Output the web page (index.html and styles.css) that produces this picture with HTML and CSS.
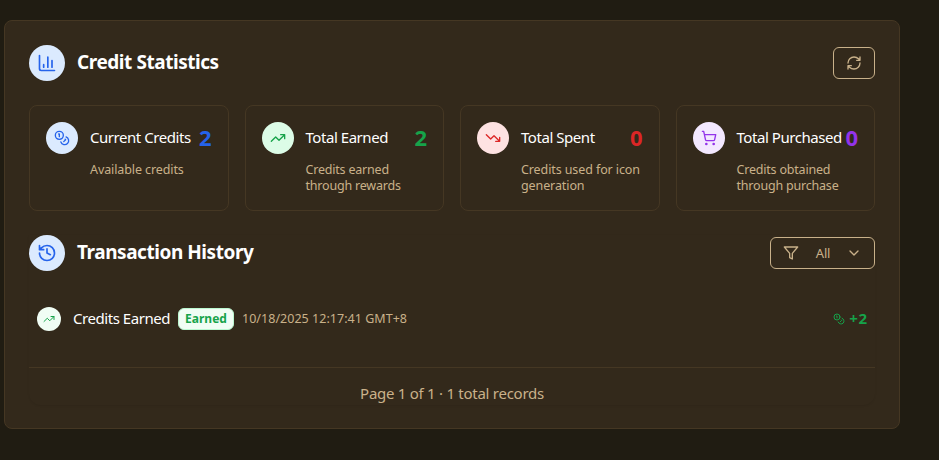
FILE: index.html
```html
<!DOCTYPE html>
<html lang="en">
<head>
<meta charset="utf-8">
<title>Credit Statistics</title>
<link rel="stylesheet" href="styles.css">
</head>
<body>
<svg class="defs" aria-hidden="true">
  <symbol id="chart" viewBox="0 0 24 24"><path d="M3 3v16a2 2 0 0 0 2 2h16M18 17V9M13 17V5M8 17v-3"/></symbol>
  <symbol id="coins" viewBox="0 0 24 24"><circle cx="8" cy="8" r="6"/><path d="M18.09 10.37A6 6 0 1 1 10.34 18M7 6h1v4M16.71 13.88l.7.71-2.82 2.82"/></symbol>
  <symbol id="up" viewBox="0 0 24 24"><path d="M22 7l-8.5 8.5-5-5L2 17M16 7h6v6"/></symbol>
  <symbol id="down" viewBox="0 0 24 24"><path d="M22 17l-8.5-8.5-5 5L2 7M16 17h6v-6"/></symbol>
  <symbol id="cart" viewBox="0 0 24 24"><circle cx="8" cy="21" r="1"/><circle cx="19" cy="21" r="1"/><path d="M2.05 2.05h2l2.66 12.42a2 2 0 0 0 2 1.58h9.78a2 2 0 0 0 1.95-1.57l1.65-7.43H5.12"/></symbol>
  <symbol id="refresh" viewBox="0 0 24 24"><path d="M3 12a9 9 0 0 1 9-9 9.75 9.75 0 0 1 6.74 2.74L21 8M21 3v5h-5M21 12a9 9 0 0 1-9 9 9.75 9.75 0 0 1-6.74-2.74L3 16M8 16H3v5"/></symbol>
  <symbol id="history" viewBox="0 0 24 24"><path d="M3 12a9 9 0 1 0 9-9 9.75 9.75 0 0 0-6.74 2.74L3 8M3 3v5h5M12 7v5l4 2"/></symbol>
  <symbol id="filter" viewBox="0 0 24 24"><path d="M22 3H2l8 9.46V19l4 2v-8.54z"/></symbol>
  <symbol id="chevron" viewBox="0 0 24 24"><path d="M6 9l6 6 6-6"/></symbol>
</svg>
<main class="panel">
  <header class="section-head">
    <span class="circle circle-lg blue"><svg class="icon i20"><use href="#chart"/></svg></span>
    <h2 class="heading">Credit Statistics</h2>
    <button class="btn btn-refresh" aria-label="Refresh"><svg class="icon i16"><use href="#refresh"/></svg></button>
  </header>
  <section class="cards">
    <article class="card">
      <span class="circle circle-md blue"><svg class="icon i16"><use href="#coins"/></svg></span>
      <div class="card-body">
        <div class="card-top"><h3 class="card-title">Current Credits</h3><span class="value v-blue">2</span></div>
        <p class="desc">Available credits</p>
      </div>
    </article>
    <article class="card">
      <span class="circle circle-md green"><svg class="icon i16"><use href="#up"/></svg></span>
      <div class="card-body">
        <div class="card-top"><h3 class="card-title">Total Earned</h3><span class="value v-green">2</span></div>
        <p class="desc desc-tight">Credits earned<br>through rewards</p>
      </div>
    </article>
    <article class="card">
      <span class="circle circle-md red"><svg class="icon i16"><use href="#down"/></svg></span>
      <div class="card-body">
        <div class="card-top"><h3 class="card-title">Total Spent</h3><span class="value v-red">0</span></div>
        <p class="desc">Credits used for icon<br>generation</p>
      </div>
    </article>
    <article class="card">
      <span class="circle circle-md purple"><svg class="icon i16"><use href="#cart"/></svg></span>
      <div class="card-body">
        <div class="card-top"><h3 class="card-title">Total Purchased</h3><span class="value v-purple">0</span></div>
        <p class="desc desc-tight">Credits obtained<br>through purchase</p>
      </div>
    </article>
  </section>
  <section class="history">
    <header class="section-head">
      <span class="circle circle-lg blue"><svg class="icon i20"><use href="#history"/></svg></span>
      <h2 class="heading">Transaction History</h2>
      <button class="btn btn-filter"><svg class="icon i16"><use href="#filter"/></svg><span>All</span><svg class="icon i16 chev"><use href="#chevron"/></svg></button>
    </header>
    <div class="row">
      <span class="circle circle-sm mint"><svg class="icon i12"><use href="#up"/></svg></span>
      <span class="row-title">Credits Earned</span>
      <span class="badge">Earned</span>
      <time class="date">10/18/2025 12:17:41 GMT+8</time>
      <span class="amount"><svg class="icon i12"><use href="#coins"/></svg><span>+2</span></span>
    </div>
    <footer class="pager">Page 1 of 1 · 1 total records</footer>
  </section>
</main>
</body>
</html>
```
FILE: styles.css
```css
* { box-sizing: border-box; }
body {
  margin: 0;
  padding: 20px 39px 31px 4px;
  min-height: 460px;
  background: #201c12;
  color: #fff;
  font-family: "Noto Sans", "Open Sans", sans-serif;
}
h2, h3, p { margin: 0; }
.defs { position: absolute; width: 0; height: 0; }
.panel {
  height: 409px;
  padding: 24px;
  border: 1px solid #453723;
  border-radius: 8px;
  background: #33291b;
}
.section-head { display: flex; align-items: center; height: 36px; }
.circle { display: flex; flex: none; align-items: center; justify-content: center; border-radius: 50%; }
.circle-lg { width: 36px; height: 36px; }
.circle-md { width: 32px; height: 32px; }
.circle-sm { width: 24px; height: 24px; }
.blue { background: #dbeafe; color: #2563eb; }
.green { background: #dcfce7; color: #16a34a; }
.red { background: #fee2e2; color: #dc2626; }
.purple { background: #f3e8ff; color: #9333ea; }
.mint { background: #f0fdf4; color: #16a34a; }
.icon { display: block; flex: none; fill: none; stroke: currentColor; stroke-width: 2; stroke-linecap: round; stroke-linejoin: round; }
.i20 { width: 20px; height: 20px; }
.i16 { width: 16px; height: 16px; }
.i12 { width: 12px; height: 12px; }
.heading { margin: 0 auto 0 12px; padding-bottom: 2px; font-size: 19px; line-height: 28px; font-weight: 700; white-space: nowrap; letter-spacing: -0.45px; }
.btn {
  display: flex;
  align-items: center;
  justify-content: center;
  height: 32px;
  padding: 0;
  border: 1px solid #c9b18a;
  border-radius: 6px;
  background: transparent;
  color: #c9b18a;
  font: 13px/16px "Noto Sans", sans-serif;
}
.btn-refresh { width: 42px; }
.btn-filter { width: 105px; justify-content: flex-start; padding-left: 12px; }
.btn-filter span { width: 16px; margin-left: 16px; padding-bottom: 1px; letter-spacing: -0.2px; }
.btn-filter .chev { margin-left: 15px; }
.cards { display: grid; grid-template-columns: repeat(4, 1fr); gap: 16px; margin-top: 24px; }
.card { display: flex; gap: 12px; height: 106px; padding: 16px; border: 1px solid #453723; border-radius: 8px; }
.card-body { flex: 1; min-width: 0; }
.card-top { display: flex; align-items: center; justify-content: space-between; height: 32px; }
.card-title { padding-bottom: 2px; font-size: 15px; line-height: 24px; font-weight: 400; white-space: nowrap; letter-spacing: -0.45px; }
.value { padding-bottom: 2px; font-size: 22px; line-height: 32px; font-weight: 700; }
.v-blue { color: #2563eb; }
.v-green { color: #16a34a; }
.v-red { color: #dc2626; }
.v-purple { color: #9333ea; }
.desc { margin-top: 8px; color: #c9b18a; font-size: 12.5px; line-height: 16px; white-space: nowrap; letter-spacing: -0.1px; }
.desc-tight { letter-spacing: -0.2px; }
.history { height: 170px; margin-top: 24px; border-radius: 0 0 12px 12px; box-shadow: 0 1px 2px rgba(0, 0, 0, 0.08); }
.row { display: flex; align-items: center; height: 40px; margin-top: 28px; padding: 0 8px; white-space: nowrap; }
.row-title { margin-left: 12px; padding-bottom: 2px; width: 97px; font-size: 15px; line-height: 24px; letter-spacing: -0.45px; }
.badge {
  width: 56px;
  height: 22px;
  margin-left: 8px;
  border: 1px solid #bbf7d0;
  border-radius: 6px;
  background: #f0fdf4;
  color: #16a34a;
  font-size: 12px;
  line-height: 20px;
  font-weight: 700;
  text-align: center;
}
.date { margin-left: 8px; color: #c9b18a; font-size: 12.5px; line-height: 20px; letter-spacing: 0.03px; }
.amount { display: flex; align-items: center; gap: 4px; margin-left: auto; color: #16a34a; font-size: 15px; line-height: 24px; font-weight: 700; }
.amount span { padding-bottom: 2px; letter-spacing: 0.7px; margin-right: -0.7px; }
.pager { height: 53px; margin-top: 28px; border-top: 1px solid #453723; color: #c9b18a; font-size: 15px; line-height: 50px; text-align: center; letter-spacing: -0.27px; }
```
